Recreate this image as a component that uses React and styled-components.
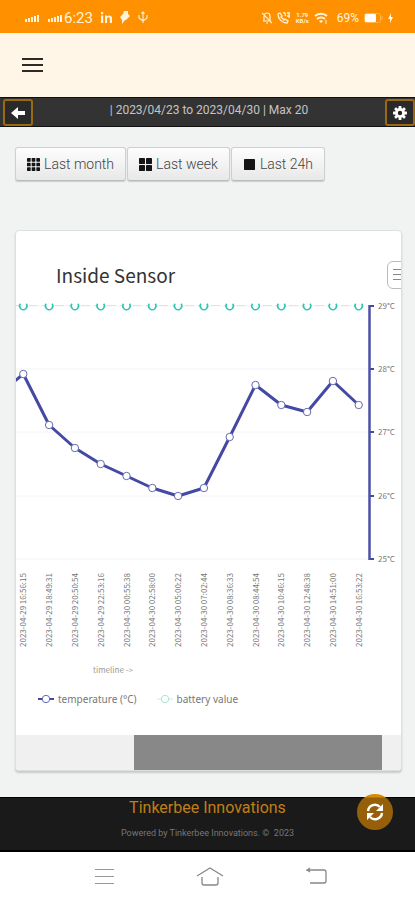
import React from "react";
import styled, { createGlobalStyle } from "styled-components";

const GlobalStyle = createGlobalStyle`
  *, *::before, *::after { box-sizing: border-box; }
  body { margin: 0; background: #f1f3f3; font-family: Roboto, "Liberation Sans", sans-serif; }
  button { font-family: inherit; cursor: pointer; }
  svg { display: block; flex: none; }
`;

const Page = styled.div`
  display: flex;
  flex-direction: column;
  min-height: 100vh;
`;

const StatusBar = styled.div`
  display: flex;
  align-items: center;
  justify-content: space-between;
  height: 33px;
  padding: 2px 22px 0 24px;
  background: #ff9100;
  color: #fff3dc;
`;

const StatusGroup = styled.div`
  display: flex;
  align-items: center;
  gap: ${(p) => p.$gap}px;
`;

const Clock = styled.span`
  font-size: 15px;
  font-weight: 400;
  line-height: 20px;
  margin-left: -6px;
`;

const Percent = styled.span`
  font-size: 12px;
  font-weight: 400;
  line-height: 20px;
  margin-left: 4px;
`;

const Rate = styled.span`
  display: flex;
  flex-direction: column;
  font-size: 6px;
  font-weight: 700;
  line-height: 6px;
  text-align: center;
`;

const Header = styled.header`
  display: flex;
  align-items: center;
  height: 64px;
  padding: 0 22px;
  background: #fff6e8;
`;

const PlainButton = styled.button`
  display: flex;
  padding: 0;
  border: 0;
  background: none;
  color: ${(p) => p.$color};
`;

const RangeBar = styled.div`
  display: flex;
  justify-content: space-between;
  height: 30px;
  padding: 1px 0 0 3px;
  background: #333;
  border-top: 1px solid #111;
  border-bottom: 1px solid #111;
`;

const RangeText = styled.span`
  padding-top: 2px;
  font-size: 12px;
  line-height: 18px;
  color: #c4c4c4;
`;

const SquareButton = styled.button`
  display: flex;
  align-items: center;
  justify-content: center;
  width: 30px;
  height: 27px;
  padding: 0;
  border: 2px solid #9a6a10;
  border-radius: 3px;
  background: #2a2a2a;
  color: #fff;
`;

const Main = styled.main`
  flex: 1;
  padding: 20px 13px 25px 15px;
`;

const Periods = styled.div`
  display: flex;
  gap: 1px;
  margin-bottom: 49px;
`;

const PeriodButton = styled.button`
  display: flex;
  align-items: center;
  gap: 4px;
  height: 34px;
  padding: 0 11px;
  border: 1px solid #d0d0d0;
  border-bottom-color: #bbb;
  border-radius: 3px;
  background: linear-gradient(#fdfdfd, #e8e8e8);
  box-shadow: 0 1px 1px #ccc;
  color: #444;
  font-size: 14px;
  font-weight: 300;
  white-space: nowrap;
`;

const Card = styled.section`
  overflow: hidden;
  border: 1px solid #dedfdf;
  border-radius: 4px;
  background: #fff;
  box-shadow: 0 2px 2px #c8caca;
`;

const CardHeader = styled.div`
  display: flex;
  align-items: center;
  justify-content: space-between;
  height: 69px;
  padding: 18px 0 0 40px;
`;

const Title = styled.h2`
  margin: 0;
  font-family: "Noto Sans CJK SC", "Noto Sans", sans-serif;
  font-size: 19px;
  font-weight: 400;
  line-height: 28px;
  color: #333;
`;

const MenuButton = styled.button`
  display: flex;
  align-items: center;
  width: 27px;
  height: 28px;
  margin-right: -13px;
  padding: 0 0 0 5px;
  border: 1px solid #bbb;
  border-radius: 6px;
  background: #fff;
  color: #888;
`;

const Chart = styled.svg`
  width: 100%;
  height: auto;
  font-family: "Noto Sans CJK SC", "Noto Sans", sans-serif;
  font-size: 8px;
  fill: #777;
`;

const Legend = styled.ul`
  display: flex;
  gap: 20px;
  margin: 0;
  padding: 9px 22px 26px;
  list-style: none;
`;

const LegendItem = styled.li`
  display: flex;
  align-items: center;
  gap: 4px;
  font-family: "Noto Sans", sans-serif;
  font-size: 10px;
  line-height: 20px;
  color: #777;
`;

const ScrollTrack = styled.div`
  display: flex;
  height: 35px;
  padding: 0 19px 0 118px;
  background: #f0f0f0;
`;

const ScrollThumb = styled.div`
  flex: 1;
  background: #888;
`;

const Footer = styled.footer`
  position: relative;
  height: 55px;
  border-top: 1px solid #000;
  border-bottom: 2px solid #000;
  background: #1a1a1a;
  text-align: center;
`;

const Brand = styled.div`
  font-size: 16px;
  line-height: 20px;
  color: #c07f16;
`;

const Powered = styled.div`
  padding-top: 8px;
  font-size: 9px;
  line-height: 14px;
  color: #777;
`;

const RefreshButton = styled.button`
  position: absolute;
  top: -4px;
  right: 22px;
  display: flex;
  align-items: center;
  justify-content: center;
  width: 36px;
  height: 36px;
  padding: 0;
  border: 0;
  border-radius: 50%;
  background: linear-gradient(#d98908 0 3px, #96600a 4px);
  color: #fff;
`;

const NavBar = styled.nav`
  display: flex;
  align-items: center;
  justify-content: space-between;
  height: 48px;
  padding: 0 88px 0 95px;
  background: #fff;
`;

const Signal = () => (
  <svg width="15" height="8" viewBox="0 0 15 8" fill="currentColor">
    <path d="M1 5h2v3H1zM4 4h2v4H4zM7 3h2v5H7zM10 2h2v6h-2zM13 1h2v7h-2z" />
  </svg>
);

const Lines = ({ w, h, t = 2 }) => (
  <svg width={w} height={h} viewBox={`0 0 ${w} ${h}`} fill="currentColor">
    <rect width={w} height={t} />
    <rect y={(h - t) / 2} width={w} height={t} />
    <rect y={h - t} width={w} height={t} />
  </svg>
);

const GridIcon = ({ n }) => {
  const size = n === 1 ? 11 : 13;
  const cell = (size - (n - 1)) / n;
  const inset = (13 - size) / 2;
  const cells = Array.from({ length: n * n }, (_, i) => i);
  return (
    <svg width="13" height="13" viewBox={`${-inset} ${-inset} 13 13`} fill="#151515">
      {cells.map((i) => (
        <rect key={i} x={(i % n) * (cell + 1)} y={Math.floor(i / n) * (cell + 1)} width={cell} height={cell} rx="0.4" />
      ))}
    </svg>
  );
};

const TEMPERATURES = [74, 125, 148, 164, 176, 188, 196, 188, 137, 85, 105, 112, 81, 105];
const TIMES = [
  "2023-04-29 16:56:15", "2023-04-29 18:49:31", "2023-04-29 20:50:54", "2023-04-29 22:53:16",
  "2023-04-30 00:55:38", "2023-04-30 02:58:00", "2023-04-30 05:00:22", "2023-04-30 07:02:44",
  "2023-04-30 08:36:33", "2023-04-30 08:44:54", "2023-04-30 10:46:15", "2023-04-30 12:48:38",
  "2023-04-30 14:51:00", "2023-04-30 16:53:22",
];
const TICKS = [[29, 6], [28, 69], [27, 132], [26, 196], [25, 259]];
const xAt = (i) => 7.3 + i * 25.8;

const SensorChart = () => (
  <Chart viewBox="0 0 385 380" role="img" aria-label="Inside Sensor temperature chart">
    {TICKS.map(([deg, y]) => (
      <g key={deg}>
        <path d={`M0 ${y}H353`} stroke="#f4f4f4" />
        <path d={`M353 ${y}h5`} stroke="#4449a3" strokeWidth="2" />
        <text x="362" y={y + 3}>{deg}°C</text>
      </g>
    ))}
    <path d="M353.5 5V260" stroke="#4b50a8" strokeWidth="2.5" />
    <path d="M0 5.5H343" stroke="#cdeee7" strokeDasharray="9 4" />
    <path
      d={`M-1 81 ${TEMPERATURES.map((y, i) => `L${xAt(i)} ${y}`).join(" ")}`}
      fill="none"
      stroke="#4449a3"
      strokeWidth="3"
      strokeLinejoin="round"
    />
    {TEMPERATURES.map((y, i) => (
      <g key={TIMES[i]}>
        <circle cx={xAt(i)} cy={y} r="3.7" fill="#fff" stroke="#6569b2" />
        <circle cx={xAt(i)} cy="6" r="3" fill="#fff" />
        <path d={`M${xAt(i) - 3} 3.8a3.7 3.7 0 1 0 6 0`} fill="none" stroke="#2cc6b5" strokeWidth="1.5" />
        <text transform={`translate(${xAt(i) + 3} 347) rotate(-90)`}>{TIMES[i]}</text>
      </g>
    ))}
    <text x="77" y="373" fill="#999">timeline -&gt;</text>
  </Chart>
);

const LegendMark = ({ line, dot }) => (
  <svg width="16" height="10" viewBox="0 0 16 10">
    <path d="M0 5h16" stroke={line} strokeWidth="2" />
    <circle cx="8" cy="5" r="3.7" fill="#fff" stroke={dot} />
  </svg>
);

export default function App() {
  return (
    <Page>
      <GlobalStyle />
      <StatusBar>
        <StatusGroup $gap={8}>
          <Signal />
          <Signal />
          <Clock>6:23</Clock>
          <svg width="11" height="11" viewBox="0 0 11 11" fill="currentColor" aria-label="LinkedIn">
            <path d="M0 3.5h2.2V11H0zM0 0h2.2v2.2H0zM4 3.5h2v1C7.3 2.7 11 2.9 11 6.3V11H8.8V7c0-2.4-2.7-2-2.7 0v4H4z" />
          </svg>
          <svg width="10" height="13" viewBox="0 0 10 13" fill="currentColor">
            <path d="M4 0h4v3l2 2-4 4H5l-3 4V9L0 6l3-3z" />
          </svg>
          <svg width="10" height="13" viewBox="0 0 10 13" fill="none" stroke="currentColor" strokeWidth="1.1">
            <path d="M5 1v11M1 4v3l4 3 4-3V4M3.5 2.5 5 1l1.5 1.5" />
          </svg>
        </StatusGroup>
        <StatusGroup $gap={5}>
          <svg width="10" height="12" viewBox="0 0 10 12" fill="none" stroke="currentColor" strokeWidth="1.2">
            <path d="M1 9h8M2 9V4a3 3 0 0 1 6 0v5M4 11h2M0 1l10 10" />
          </svg>
          <svg width="14" height="12" viewBox="0 0 14 12" fill="none" stroke="currentColor" strokeWidth="1.3">
            <path d="M1 2c0 5 4 9 9 9l1-2-3-2-1 1-3-3 1-1-2-3zM6 1c2-1 3 1 2 3M10 1h3M10 4h3M12 1v5" />
          </svg>
          <Rate><span>1.79</span><span>KB/s</span></Rate>
          <svg width="14" height="12" viewBox="0 0 14 12" fill="none" stroke="currentColor" strokeWidth="1.8">
            <path d="M1 4c3-3 9-3 12 0M3 7c2-2 6-2 8 0" />
            <path d="M5 9c1-1 3-1 4 0l-2 2z" fill="currentColor" stroke="none" />
            <path d="M12 8v4" strokeWidth="1" />
          </svg>
          <Percent>69%</Percent>
          <svg width="19" height="10" viewBox="0 0 19 10">
            <rect x="0.5" y="0.5" width="16" height="9" rx="2" fill="none" stroke="#ffb54d" />
            <rect x="1" y="1" width="11" height="8" rx="1" fill="#fff" />
            <path d="M18 3v4" stroke="#ffb54d" />
          </svg>
          <svg width="5" height="10" viewBox="0 0 5 10" fill="currentColor">
            <path d="M3 0 0 6h2v4l3-6H3z" />
          </svg>
        </StatusGroup>
      </StatusBar>
      <Header>
        <PlainButton $color="#2c2b29" aria-label="Open menu"><Lines w={21} h={14} /></PlainButton>
      </Header>
      <RangeBar>
        <SquareButton aria-label="Back">
          <svg width="14" height="12" viewBox="0 0 14 12" fill="currentColor"><path d="M7 0v4h7v4H7v4L0 6z" /></svg>
        </SquareButton>
        <RangeText>| 2023/04/23 to 2023/04/30 | Max 20</RangeText>
        <SquareButton aria-label="Settings">
          <svg width="14" height="14" viewBox="-7 -7 14 14">
            {[0, 45, 90, 135].map((a) => (
              <rect key={a} x="-1.4" y="-7" width="2.8" height="14" rx="0.5" fill="currentColor" transform={`rotate(${a})`} />
            ))}
            <circle r="5" fill="currentColor" />
            <circle r="2.2" fill="#222" />
          </svg>
        </SquareButton>
      </RangeBar>
      <Main>
        <Periods>
          <PeriodButton><GridIcon n={3} />Last month</PeriodButton>
          <PeriodButton><GridIcon n={2} />Last week</PeriodButton>
          <PeriodButton><GridIcon n={1} />Last 24h</PeriodButton>
        </Periods>
        <Card>
          <CardHeader>
            <Title>Inside Sensor</Title>
            <MenuButton aria-label="Chart menu"><Lines w={15} h={11} t={1} /></MenuButton>
          </CardHeader>
          <SensorChart />
          <Legend>
            <LegendItem><LegendMark line="#4449a3" dot="#6569b2" />temperature (°C)</LegendItem>
            <LegendItem><LegendMark line="#e2f6f0" dot="#a9e6d8" />battery value</LegendItem>
          </Legend>
          <ScrollTrack><ScrollThumb /></ScrollTrack>
        </Card>
      </Main>
      <Footer>
        <Brand>Tinkerbee Innovations</Brand>
        <Powered>Powered by Tinkerbee Innovations. © &nbsp;2023</Powered>
        <RefreshButton aria-label="Refresh">
          <svg width="18" height="18" viewBox="0 0 18 18" fill="none" stroke="currentColor" strokeWidth="2.4">
            <path d="M2 8a7 7 0 0 1 12-4M16 10a7 7 0 0 1-12 4" />
            <path d="M17 1v7h-7zM1 17v-7h7z" fill="currentColor" stroke="none" />
          </svg>
        </RefreshButton>
      </Footer>
      <NavBar>
        <PlainButton $color="#999" aria-label="Recent apps"><Lines w={19} h={15} t={1} /></PlainButton>
        <PlainButton $color="#888" aria-label="Home">
          <svg width="28" height="19" viewBox="0 0 28 19" fill="none" stroke="currentColor" strokeWidth="1.3">
            <path d="M1 9 14 1l13 8M6 10v6q0 2 2 2h12q2 0 2-2v-6" />
          </svg>
        </PlainButton>
        <PlainButton $color="#888" aria-label="Go back">
          <svg width="21" height="18" viewBox="0 0 21 18" fill="none" stroke="currentColor" strokeWidth="1.3">
            <path d="M4 1 1 3h17q2 0 2 2v9q0 2-2 2H4M1 3l3 2" />
          </svg>
        </PlainButton>
      </NavBar>
    </Page>
  );
}
